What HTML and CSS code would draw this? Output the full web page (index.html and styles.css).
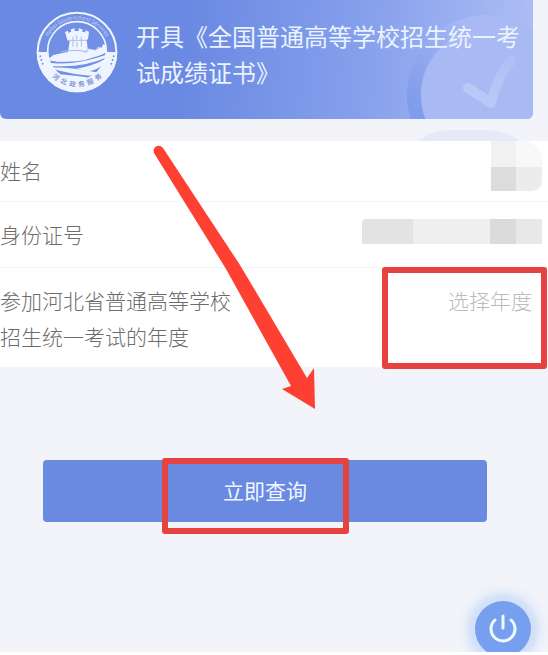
FILE: index.html
```html
<!DOCTYPE html>
<html lang="zh-CN">
<head>
    <meta charset="UTF-8">
    <meta name="viewport" content="width=device-width, initial-scale=1.0">
    <title>成绩证书</title>
    <link rel="stylesheet" href="styles.css">
</head>
<body>
    <main class="screen">
        <header class="banner">
            <svg class="banner-art" width="126" height="119" viewBox="0 0 126 119" aria-hidden="true">
                <defs>
                    <linearGradient id="ring" x1="0" y1="1" x2="1" y2="0">
                        <stop offset="0.2" stop-color="#7f9bec"/>
                        <stop offset="0.7" stop-color="#a9b9f3"/>
                    </linearGradient>
                    <linearGradient id="tick" x1="0" y1="1" x2="1" y2="0">
                        <stop offset="0.3" stop-color="#bac8f7"/>
                        <stop offset="1" stop-color="#b0bff4"/>
                    </linearGradient>
                </defs>
                <circle cx="80" cy="95" r="73" fill="#a8b9f3" stroke="url(#ring)" stroke-width="14"/>
                <path d="M61 88l23 15q6-26 20-42" fill="none" stroke="url(#tick)" stroke-width="10" stroke-linecap="round" stroke-linejoin="round"/>
            </svg>
            <svg class="seal" width="82" height="82" viewBox="29 31 246 246" aria-hidden="true">
                <defs>
                    <path id="seal-top" d="M54 142A99 99 0 0 1 250 142"/>
                    <path id="seal-bottom" d="M46 180A111 111 0 0 0 258 180"/>
                    <clipPath id="seal-inner"><circle cx="152" cy="151" r="88"/></clipPath>
                </defs>
                <circle cx="152" cy="154" r="118" fill="#7190e5" stroke="#eef5ff" stroke-width="6"/>
                <path d="M31 154a121 121 0 0 0 242 0z" fill="#eef5ff"/>
                <circle cx="152" cy="151" r="88" fill="#7190e5" stroke="#eef5ff" stroke-width="5"/>
                <g clip-path="url(#seal-inner)" fill="#eef5ff">
                    <path d="M116 94l9-4v6l9-2v-8l11-3v8h12v-8l11 3v7l9 2v-6l11 4-3 22-4 3 3 26 24 4 8-10 10 3 4-10 18 5v14l-28 14-28 5-16 10-82 4-27-8 14-12 28-6 16-3 5-32-7-4z"/>
                    <path d="M56 168q65 20 188-26v12Q160 196 58 178z"/>
                    <path d="M60 185q80 14 184-24v8Q170 204 66 195z"/>
                    <path d="M68 201q55-4 150 15l-6 10q-70-2-144-25z"/>
                    <path d="M84 220q66 4 118 14l-50 12q-40-2-68-26z"/>
                    <path d="M150 204q52-8 92-32l-4 16q-28 22-52 24z"/>
                </g>
                <g stroke="#a9bbee" stroke-width="3" fill="none">
                    <path d="M140 108v30M151 104v12M165 108v30M126 119h56M152 124v16M104 154q42-10 80 0M204 149l18-10M190 143l-18 13"/>
                </g>
                <g fill="#7893df">
                    <circle cx="42" cy="167" r="3"/><circle cx="45" cy="178" r="3"/><circle cx="49" cy="189" r="3"/>
                    <circle cx="262" cy="167" r="3"/><circle cx="259" cy="178" r="3"/><circle cx="255" cy="189" r="3"/>
                </g>
                <text class="seal-en"><textPath href="#seal-top" startOffset="50%">Hebei Government Services</textPath></text>
                <text class="seal-cn"><textPath href="#seal-bottom" startOffset="50%">河&#160;&#160;北&#160;&#160;政&#160;&#160;务&#160;&#160;服&#160;&#160;务</textPath></text>
            </svg>
            <h1>开具《全国普通高等学校招生统一考试成绩证书》</h1>
        </header>

        <form class="query">
            <svg class="reflection" width="124" height="24" viewBox="0 0 124 24" aria-hidden="true">
                <path d="M0 11Q14 0 30 0h38q24 1 34 12z" fill="#e6eaf7"/>
            </svg>
            <div class="row">
                <span class="label">姓名</span>
                <span class="mask mask-name"><i></i><i></i><i></i><i></i></span>
            </div>
            <div class="row">
                <span class="label">身份证号</span>
                <span class="mask mask-id"><i></i><i></i><i></i><i></i></span>
            </div>
            <div class="row row-year">
                <label class="label" for="year">参加河北省普通高等学校招生统一考试的年度</label>
                <select id="year">
                    <option>选择年度</option>
                </select>
                <span class="mark mark-year"></span>
            </div>
            <div class="actions">
                <button class="submit" type="button">立即查询</button>
                <span class="mark mark-submit"></span>
            </div>
        </form>

        <button class="power" type="button" aria-label="退出">
            <svg width="32" height="32" viewBox="0 0 32 32" aria-hidden="true">
                <path d="M16 3v12M8 7a12 12 0 1 0 16 0" fill="none" stroke="#eefaff" stroke-width="3" stroke-linecap="round"/>
            </svg>
        </button>

        <svg class="arrow" width="164" height="266" viewBox="0 0 164 266" aria-hidden="true">
            <path d="M1 8C-1 2 6-2 10 3L87 120L154 233L161 223L162 264L129 244L138 241L73 124z" fill="#fd4032"/>
        </svg>
    </main>
</body>
</html>
```
FILE: styles.css
```css
* {
    box-sizing: border-box;
}
body {
    margin: 0;
    background: #fff;
    color: #6c6c6c;
    font-family: "Noto Sans CJK SC", sans-serif;
    font-size: 21px;
    font-weight: 300;
}
.screen {
    position: relative;
    min-height: calc(100vh - 3px);
    overflow: hidden;
    background: #f2f4f9;
}

/* banner */
.banner {
    position: relative;
    display: flex;
    align-items: flex-start;
    gap: 18px;
    height: 119px;
    margin-right: 15px;
    padding: 11px 8px 0 36px;
    overflow: hidden;
    border-radius: 0 0 6px 6px;
    background: linear-gradient(95deg, #6a89e2 35%, #86a0ec 68%, #afbef4);
}
.banner h1 {
    position: relative;
    flex: 1;
    margin: 7px 0 0;
    color: #eaf3ff;
    font-size: 24px;
    font-weight: 400;
    line-height: 36px;
}
.banner-art {
    position: absolute;
    right: 0;
    bottom: 0;
}
.seal {
    flex: none;
}
.seal-en,
.seal-cn {
    font-family: "Noto Sans CJK SC", sans-serif;
    text-anchor: middle;
}
.seal-en {
    fill: #dfe9ff;
    font-size: 17px;
}
.seal-cn {
    fill: #7f96d6;
    font-size: 20px;
    font-weight: 700;
}

/* form */
.query {
    position: relative;
    margin-top: 22px;
}
.reflection {
    position: absolute;
    top: -11px;
    right: 6px;
}
.row {
    position: relative;
    display: flex;
    align-items: center;
    justify-content: space-between;
    min-height: 66px;
    padding: 0 6px 2px 0;
    border-bottom: 1px solid #f4f4f6;
    background: #fff;
    line-height: 36px;
}
.row:first-of-type {
    min-height: 61px;
}
.row-year {
    align-items: flex-start;
    min-height: 100px;
    padding: 14px 16px 12px 0;
}
.label {
    max-width: 232px;
}
select {
    width: 130px;
    height: 36px;
    padding: 0;
    border: 0;
    appearance: none;
    background: none;
    color: #bbb;
    font: inherit;
    text-align: right;
    text-align-last: right;
}

/* blurred personal data */
.mask {
    display: grid;
}
.mask-name {
    align-self: flex-end;
    grid-template: 26px 24px / 25px 26px;
    margin-bottom: 8px;
}
.mask-name i:nth-child(1) {
    background: #f1f1f1;
}
.mask-name i:nth-child(2) {
    border-top-right-radius: 20px;
    background: #f8f8f8;
}
.mask-name i:nth-child(3) {
    background: #dcdcdc;
}
.mask-name i:nth-child(4) {
    border-bottom-right-radius: 10px;
    background: #ececec;
}
.mask-id {
    grid-template: 25px / 51px 77px 26px 26px;
    align-self: flex-start;
    margin-top: 17px;
}
.mask-id i:nth-child(1) {
    border-top-left-radius: 4px;
    background: #e3e3e3;
}
.mask-id i:nth-child(2) {
    background: #efefef;
}
.mask-id i:nth-child(3) {
    background: #dbdbdb;
}
.mask-id i:nth-child(4) {
    background: #e8e8e8;
}

.actions {
    position: relative;
    margin: 92px 61px 0 43px;
}
.submit {
    display: block;
    width: 100%;
    height: 62px;
    padding: 0 0 2px;
    border: 0;
    border-radius: 4px;
    background: #6a89e1;
    color: #f0f8ff;
    font: inherit;
    font-weight: 400;
}

/* red guide marks */
.mark {
    position: absolute;
    border: 6px solid #e64340;
    border-radius: 3px;
    pointer-events: none;
}
.mark-year {
    top: -1px;
    right: 1px;
    width: 165px;
    height: 102px;
    z-index: 1;
}
.mark-submit {
    top: -2px;
    left: 50%;
    width: 187px;
    height: 76px;
    margin-left: -103px;
}
.arrow {
    position: absolute;
    top: 145px;
    left: 153px;
    pointer-events: none;
}

.power {
    position: absolute;
    right: 17px;
    bottom: -5px;
    display: flex;
    align-items: center;
    justify-content: center;
    width: 56px;
    height: 56px;
    padding: 0;
    border: 0;
    border-radius: 50%;
    background: #76a0ef;
    box-shadow: 0 0 4px 7px #d3e1f8, 0 0 8px 13px #e5ecf9;
}
```
